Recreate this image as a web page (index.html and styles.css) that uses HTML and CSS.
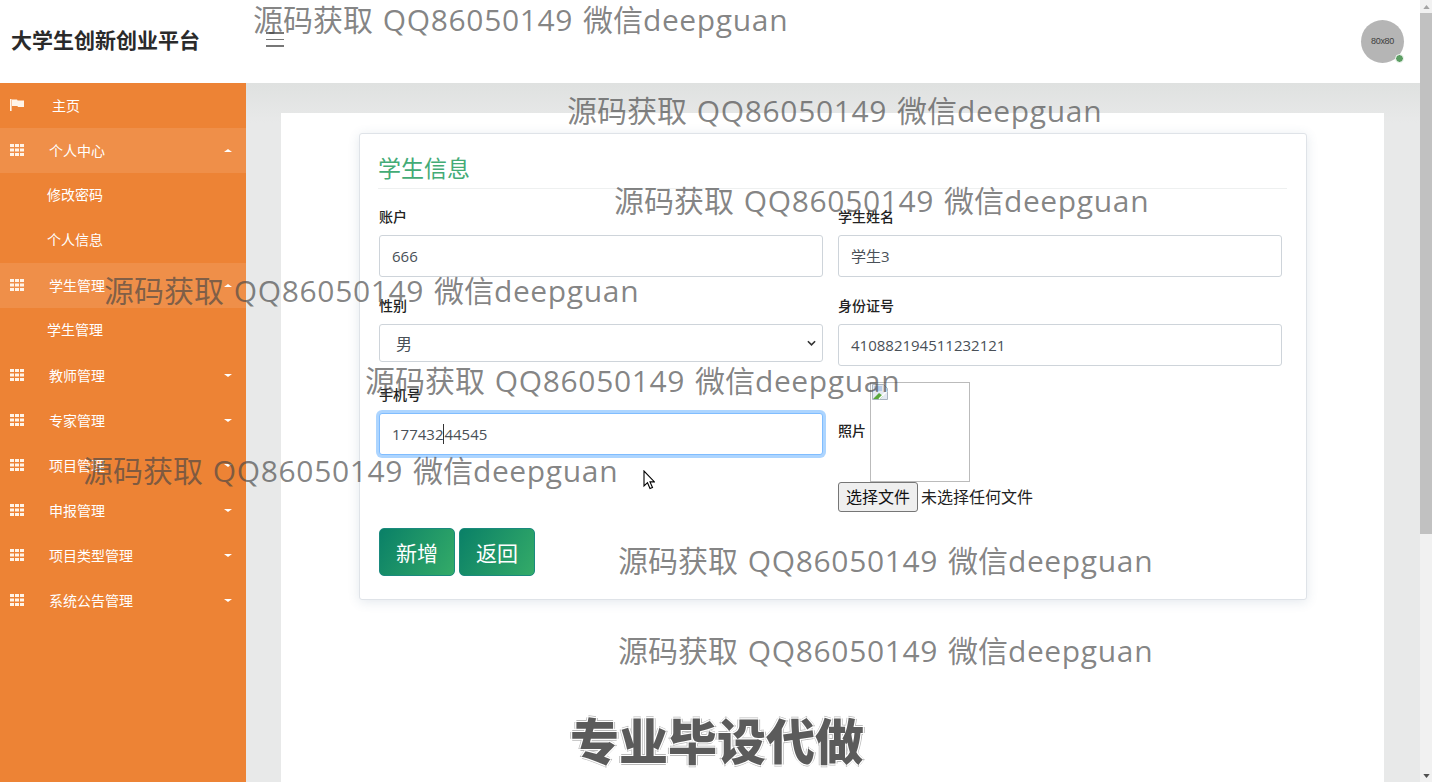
FILE: index.html
```html
<!DOCTYPE html>
<html lang="zh">
<head>
<meta charset="utf-8">
<title>大学生创新创业平台</title>
<link rel="stylesheet" href="styles.css">
</head>
<body>
<div class="page">
  <div class="viewport">
    <header class="topbar">
      <div class="brand">大学生创新创业平台</div>
      <div class="burger"><i></i><i></i><i></i></div>
      <div class="avatar"><span>80x80</span><b></b></div>
    </header>
    <div class="body-row">
      <nav class="sidebar">
        <a class="nav-item home"><svg class="ico" viewBox="0 0 14 12"><path d="M0 0h1.600v12H0zM2 .5h5l.6 1H14v6.500H8l-.6-1H2z"/></svg><span>主页</span></a>
        <a class="nav-item open"><svg class="ico" viewBox="0 0 14 12"><path d="M0 0h4v3H0zM5 0h4v3H5zM10 0h4v3h-4zM0 4.500h4v3H0zM5 4.500h4v3H5zM10 4.500h4v3h-4zM0 9h4v3H0zM5 9h4v3H5zM10 9h4v3h-4z"/></svg><span>个人中心</span><em class="up"></em></a>
        <a class="sub-item">修改密码</a>
        <a class="sub-item">个人信息</a>
        <a class="nav-item open"><svg class="ico" viewBox="0 0 14 12"><path d="M0 0h4v3H0zM5 0h4v3H5zM10 0h4v3h-4zM0 4.500h4v3H0zM5 4.500h4v3H5zM10 4.500h4v3h-4zM0 9h4v3H0zM5 9h4v3H5zM10 9h4v3h-4z"/></svg><span>学生管理</span><em class="up"></em></a>
        <a class="sub-item">学生管理</a>
        <a class="nav-item"><svg class="ico" viewBox="0 0 14 12"><path d="M0 0h4v3H0zM5 0h4v3H5zM10 0h4v3h-4zM0 4.500h4v3H0zM5 4.500h4v3H5zM10 4.500h4v3h-4zM0 9h4v3H0zM5 9h4v3H5zM10 9h4v3h-4z"/></svg><span>教师管理</span><em></em></a>
        <a class="nav-item"><svg class="ico" viewBox="0 0 14 12"><path d="M0 0h4v3H0zM5 0h4v3H5zM10 0h4v3h-4zM0 4.500h4v3H0zM5 4.500h4v3H5zM10 4.500h4v3h-4zM0 9h4v3H0zM5 9h4v3H5zM10 9h4v3h-4z"/></svg><span>专家管理</span><em></em></a>
        <a class="nav-item"><svg class="ico" viewBox="0 0 14 12"><path d="M0 0h4v3H0zM5 0h4v3H5zM10 0h4v3h-4zM0 4.500h4v3H0zM5 4.500h4v3H5zM10 4.500h4v3h-4zM0 9h4v3H0zM5 9h4v3H5zM10 9h4v3h-4z"/></svg><span>项目管理</span><em></em></a>
        <a class="nav-item"><svg class="ico" viewBox="0 0 14 12"><path d="M0 0h4v3H0zM5 0h4v3H5zM10 0h4v3h-4zM0 4.500h4v3H0zM5 4.500h4v3H5zM10 4.500h4v3h-4zM0 9h4v3H0zM5 9h4v3H5zM10 9h4v3h-4z"/></svg><span>申报管理</span><em></em></a>
        <a class="nav-item"><svg class="ico" viewBox="0 0 14 12"><path d="M0 0h4v3H0zM5 0h4v3H5zM10 0h4v3h-4zM0 4.500h4v3H0zM5 4.500h4v3H5zM10 4.500h4v3h-4zM0 9h4v3H0zM5 9h4v3H5zM10 9h4v3h-4z"/></svg><span>项目类型管理</span><em></em></a>
        <a class="nav-item"><svg class="ico" viewBox="0 0 14 12"><path d="M0 0h4v3H0zM5 0h4v3H5zM10 0h4v3h-4zM0 4.500h4v3H0zM5 4.500h4v3H5zM10 4.500h4v3h-4zM0 9h4v3H0zM5 9h4v3H5zM10 9h4v3h-4z"/></svg><span>系统公告管理</span><em></em></a>
      </nav>
      <main class="content">
        <div class="panel">
          <section class="card">
            <h2 class="card-title">学生信息</h2>
            <form class="form-grid">
              <div class="field"><label>账户</label><div class="input">666</div></div>
              <div class="field"><label>学生姓名</label><div class="input">学生3</div></div>
              <div class="field"><label>性别</label>
                <div class="select"><span>男</span><svg viewBox="0 0 10 6"><path d="M1 1l4 4 4-4" fill="none" stroke="#333" stroke-width="1.800"/></svg></div>
              </div>
              <div class="field"><label>身份证号</label><div class="input">410882194511232121</div></div>
              <div class="field"><label>手机号</label><div class="input focus">177432<i class="caret"></i>44545</div></div>
              <div class="photo">
                <div class="photo-row">
                  <label>照片</label>
                  <div class="preview"><svg class="broken" viewBox="0 0 16 16"><path d="M.5.5h11l4 4v11H.5z" fill="#e3e9f2" stroke="#a9b4c0"/><path d="M2 2h8v5H2z" fill="#b9cdea"/><path d="M1 15l6-6 4 3-3 3z" fill="#5aa83c"/><path d="M15 7L7 15" stroke="#fff" stroke-width="1.500"/></svg></div>
                </div>
                <div class="file-row"><span class="file-btn">选择文件</span><span class="file-text">未选择任何文件</span></div>
              </div>
            </form>
            <div class="actions"><span class="btn">新增</span><span class="btn">返回</span></div>
          </section>
        </div>
      </main>
    </div>
  </div>
  <div class="scrollbar">
    <div class="arrow"><svg viewBox="0 0 8 5"><path d="M0 5l4-5 4 5z"/></svg></div>
    <div class="thumb"></div>
    <div class="track"></div>
    <div class="arrow down"><svg viewBox="0 0 8 5"><path d="M0 0l4 5 4-5z"/></svg></div>
  </div>

  <div class="wm w1">源码获取 <span>QQ86050149</span> 微信<span>deepguan</span></div>
  <div class="wm w2">源码获取 <span>QQ86050149</span> 微信<span>deepguan</span></div>
  <div class="wm w3">源码获取 <span>QQ86050149</span> 微信<span>deepguan</span></div>
  <div class="wm w4">源码获取 <span>QQ86050149</span> 微信<span>deepguan</span></div>
  <div class="wm w5">源码获取 <span>QQ86050149</span> 微信<span>deepguan</span></div>
  <div class="wm w6">源码获取 <span>QQ86050149</span> 微信<span>deepguan</span></div>
  <div class="wm w7">源码获取 <span>QQ86050149</span> 微信<span>deepguan</span></div>
  <div class="wm w8">源码获取 <span>QQ86050149</span> 微信<span>deepguan</span></div>
  <div class="stamp">专业毕设代做</div>
  <svg class="cursor" viewBox="0 0 12 20"><path d="M1 1v15l3.500-3.300L7 18.500l2.500-1-2.500-5.600h4.500z" fill="#fff" stroke="#000" stroke-width="1.100"/></svg>
</div>
</body>
</html>
```
FILE: styles.css
```css
* { box-sizing: border-box; }
html, body { margin: 0; height: 100%; overflow: hidden; }
body { font-family: "Open Sans", "Noto Sans CJK SC", sans-serif; background: #fff; color: #495057; }
.page { position: relative; display: flex; width: 1432px; height: 782px; overflow: hidden; }
.viewport { width: 1420px; height: 782px; display: flex; flex-direction: column; }

.topbar { height: 83px; flex: none; display: flex; align-items: center; background: #fff; padding: 0 16px 0 11px; }
.brand { width: 255px; font: 700 21px/28px "Noto Sans CJK SC", sans-serif; color: #2a2a2a; position: relative; top: -3px; }
.burger { width: 18px; height: 15px; margin: -4px 0 0 0; display: flex; flex-direction: column; gap: 5px; }
.burger i { display: block; height: 1.500px; background: #777; }
.avatar { position: relative; margin-left: auto; width: 43px; height: 43px; border-radius: 50%; background: #b5b5b5; display: flex; align-items: center; justify-content: center; }
.avatar span { font: 9px/1 "Liberation Sans", sans-serif; color: #3d3d3d; letter-spacing: -.3px; }
.avatar b { position: absolute; right: 0; bottom: 0; width: 9px; height: 9px; border-radius: 50%; background: #5c9e63; border: 1.500px solid #fff; }

.body-row { flex: 1; display: flex; min-height: 0; }
.sidebar { width: 246px; flex: none; background: #ed8335; display: flex; flex-direction: column; }
.nav-item { height: 45px; flex: none; display: flex; align-items: center; padding: 0 14px 0 10px; color: #fff; font: 14px/18px "Noto Sans CJK SC", sans-serif; }
.nav-item.open { background: #ef8f49; }
.nav-item span { margin-left: 25px; position: relative; top: -1px; }
.nav-item.home span { margin-left: 28px; }
.ico { width: 14px; height: 12px; fill: #fff4e8; flex: none; position: relative; top: -1px; }
.nav-item em { margin-left: auto; margin-right: 0; width: 0; height: 0; border-left: 4px solid transparent; border-right: 4px solid transparent; border-top: 3px solid #fff; }
.nav-item em.up { border-top: 0; border-bottom: 3px solid #fff; }
.sub-item { height: 45px; flex: none; display: flex; align-items: center; padding: 0 0 3px 47px; color: #fff; font: 14px/18px "Noto Sans CJK SC", sans-serif; }

.content { flex: 1; min-width: 0; padding: 30px 36px 0 35px; background: linear-gradient(#dfe1e0, #e8e9e9 40px); }
.panel { height: 100%; background: #fff; padding: 20px 77px 0 78px; }
.card { height: 467px; background: #fff; border: 1px solid #dfe3e8; border-radius: 3px; box-shadow: 0 2px 12px rgba(60, 90, 130, .14); padding: 18px 19px 0; }
.card-title { margin: 0 0 0 -1px; height: 37px; font: 400 23px/30px "Noto Sans CJK SC", sans-serif; color: #43ab76; border-bottom: 1px solid #eef0f0; width: 909px; }
.form-grid { display: grid; grid-template-columns: 444px 444px; column-gap: 15px; margin-top: 18px; }
.field { height: 89px; display: flex; flex-direction: column; }
label { display: block; font: 500 14px/19px "Noto Sans CJK SC", sans-serif; color: #222; }
.field label { margin-bottom: 9px; }
.input { height: 42px; flex: none; border: 1px solid #ced4da; border-radius: 3px; padding: 0 12px; display: flex; align-items: center; font: 15px/20px "Open Sans", "Noto Sans CJK SC", sans-serif; color: #495057; background: #fff; }
.input.focus { border-color: #80bdff; box-shadow: 0 0 0 3px rgba(0, 123, 255, .32); }
.caret { display: inline-block; width: 1px; height: 20px; background: #333; }
.select { height: 38px; flex: none; border: 1px solid #ced4da; border-radius: 3px; padding: 0 6px 0 16px; display: flex; align-items: center; justify-content: space-between; font: 16px/20px "Noto Sans CJK SC", sans-serif; color: #495057; background: #fff; }
.select svg { width: 9px; height: 6px; }
.photo { margin-top: -3px; }
.photo-row { display: flex; align-items: center; height: 100px; }
.photo-row label { width: 32px; padding-bottom: 4px; }
.preview { width: 100px; height: 100px; border: 1px solid #bbb; }
.broken { display: block; width: 16px; height: 16px; margin: 1px 0 0 1px; }
.file-row { display: flex; align-items: center; gap: 3px; font: 16px/18px "Noto Sans CJK SC", sans-serif; color: #222; }
.file-btn { width: 80px; height: 30px; padding-bottom: 2px; display: flex; align-items: center; justify-content: center; background: #efefef; border: 1px solid #767676; border-radius: 3px; color: #111; }
.file-text { position: relative; top: -1px; }
.actions { display: flex; gap: 4px; margin-top: 16px; }
.btn { width: 76px; height: 48px; border: 1px solid #1a8a7e; border-radius: 5px; background: linear-gradient(120deg, #0a8067, #34ab68); color: #fff; display: flex; align-items: center; justify-content: center; font: 21px/28px "Noto Sans CJK SC", sans-serif; }

.scrollbar { width: 12px; height: 782px; flex: none; display: flex; flex-direction: column; background: #f1f1f1; }
.arrow { height: 13px; display: flex; align-items: center; justify-content: center; flex: none; }
.arrow svg { width: 7px; height: 4px; fill: #a3a3a3; }
.arrow.down svg { fill: #505050; }
.thumb { height: 521px; background: #c1c1c1; flex: none; }
.track { flex: 1; }

.wm { position: absolute; font: 400 30px/40px "Open Sans", "Noto Sans CJK SC", sans-serif; color: rgba(70, 70, 70, .66); white-space: nowrap; word-spacing: 2px; }
.wm span { letter-spacing: .64px; }
.w1 { left: 253px; top: 0; }
.w2 { left: 567px; top: 91px; }
.w3 { left: 614px; top: 181px; }
.w4 { left: 104px; top: 271px; }
.w5 { left: 365px; top: 361px; }
.w6 { left: 83px; top: 451px; }
.w7 { left: 618px; top: 541px; }
.w8 { left: 618px; top: 631px; }
.stamp { position: absolute; left: 570px; top: 704px; font: 900 49px/70px "Noto Sans CJK SC", sans-serif; color: #5b5b5b; text-shadow: 1px 1px 0 #fff, -1px -1px 0 #fff, 1px -1px 0 #fff, -1px 1px 0 #fff, 2px 0 0 #bbb, -2px 0 0 #bbb, 0 2px 0 #bbb, 0 -2px 0 #bbb; white-space: nowrap; }
.cursor { position: absolute; left: 643px; top: 470px; width: 12px; height: 20px; }
```
